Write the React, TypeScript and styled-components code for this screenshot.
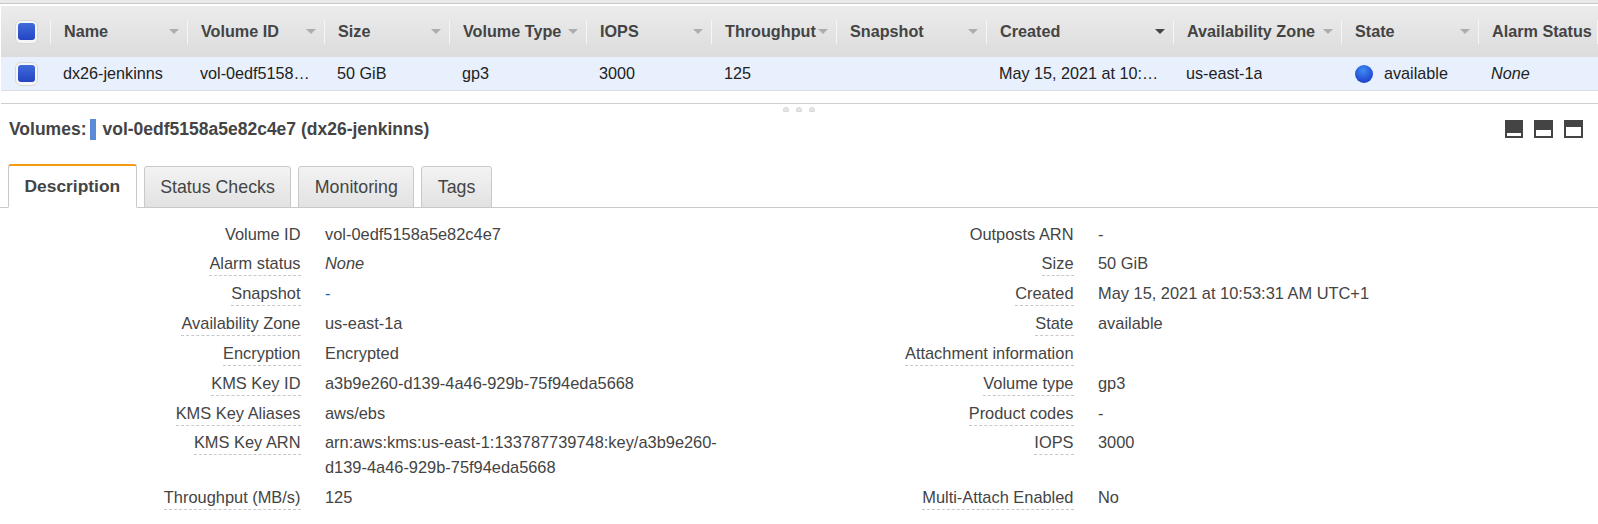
import React, { FC } from "react";
import styled, { createGlobalStyle } from "styled-components";

const GlobalStyle = createGlobalStyle`
	html, body {
		margin: 0;
		padding: 0;
		background: #fff;
		overflow: hidden;
	}
	body {
		font-family: "Liberation Sans", Arial, sans-serif;
		font-size: 14px;
		color: #444;
	}
`;

const Page = styled.div`
	width: 1598px;
	height: 524px;
	overflow: hidden;
`;

const TopStrip = styled.div`
	height: 3px;
	background: #eaeaea;
	border-bottom: 1px solid #c8c8c8;
	margin-bottom: 2px;
`;

const TableGrid = styled.div`
	margin-left: 1px;
	display: grid;
	grid-template-columns: 50px 137px 137px 125px 137px 125px 125px 150px 187px 168px 137px 119px;
`;

const HeaderCell = styled.div<{ $first?: boolean }>`
	height: 51px;
	box-sizing: border-box;
	background: linear-gradient(#ececec, #dcdcdc);
	display: flex;
	align-items: center;
	justify-content: ${(p) => (p.$first ? "center" : "space-between")};
	padding: ${(p) => (p.$first ? "0" : "0 9px 0 13px")};
	font-weight: bold;
	font-size: 16.2px;
	color: #444;
	white-space: nowrap;
	overflow: hidden;
	position: relative;
	&::after {
		content: "";
		position: absolute;
		right: 0;
		top: 14px;
		height: 24px;
		width: 1px;
		background: #f6f6f6;
	}
`;

const SortArrow = styled.span<{ $active?: boolean }>`
	flex: none;
	width: 0;
	height: 0;
	border-left: 5px solid transparent;
	border-right: 5px solid transparent;
	border-top: 5px solid ${(p) => (p.$active ? "#444" : "#adadad")};
`;

const RowCell = styled.div<{ $center?: boolean; $italic?: boolean }>`
	height: 34px;
	box-sizing: border-box;
	background: #e8f0fd;
	border-bottom: 1px solid #d9dde3;
	display: flex;
	align-items: center;
	justify-content: ${(p) => (p.$center ? "center" : "flex-start")};
	padding: ${(p) => (p.$center ? "0" : "0 12px")};
	font-size: 16.2px;
	font-style: ${(p) => (p.$italic ? "italic" : "normal")};
	color: #222;
	white-space: nowrap;
	overflow: hidden;
`;

const CellText = styled.span`
	overflow: hidden;
	text-overflow: ellipsis;
`;

const CheckOuter = styled.span`
	width: 23px;
	height: 24px;
	box-sizing: border-box;
	display: flex;
	align-items: center;
	justify-content: center;
	background: #f6f6f6;
	border: 1px solid #d8d8d8;
	border-radius: 6px;
`;

const CheckInner = styled.span`
	width: 17px;
	height: 17px;
	border-radius: 3px;
	background: linear-gradient(#3f6bdc, #2444c2);
`;

const StatusDot = styled.span`
	flex: none;
	width: 18px;
	height: 18px;
	border-radius: 50%;
	margin: 0 11px 0 1px;
	background: radial-gradient(circle at 45% 30%, #3f8cf0, #2450d8 60%, #1c2fa8);
`;

const Divider = styled.div`
	height: 12px;
	border-bottom: 1px solid #cfcfcf;
	margin-left: 1px;
`;

const GripRow = styled.div`
	height: 5px;
	padding-top: 3px;
	display: flex;
	justify-content: center;
	gap: 7px;
`;

const GripDot = styled.span`
	width: 6px;
	height: 5px;
	border-radius: 3px 3px 1px 1px;
	background: #e6e6e6;
	border: 1px solid #d6d6d6;
	box-sizing: border-box;
`;

const TitleBar = styled.div`
	height: 22px;
	margin-top: 6px;
	padding: 0 15px 0 9px;
	display: flex;
	align-items: center;
	font-weight: bold;
	font-size: 17.5px;
	color: #444;
`;

const TitleMark = styled.span`
	width: 6px;
	height: 21px;
	background: #5a8bd6;
	margin: 0 6px 0 4px;
`;

const TitleIcons = styled.div`
	margin-left: auto;
	display: flex;
	gap: 11px;
`;

const TabStrip = styled.div`
	margin-top: 24px;
	height: 44px;
	box-sizing: border-box;
	border-bottom: 1px solid #c9c9c9;
	padding-left: 8px;
	display: flex;
	align-items: flex-end;
	gap: 7px;
`;

const Tab = styled.div<{ $active?: boolean }>`
	box-sizing: border-box;
	height: ${(p) => (p.$active ? "44px" : "42px")};
	margin-bottom: -1px;
	padding: 0 15.5px;
	display: flex;
	align-items: center;
	font-size: ${(p) => (p.$active ? "17.4px" : "17.8px")};
	font-weight: ${(p) => (p.$active ? "bold" : "normal")};
	color: #444;
	border: 1px solid #c9c9c9;
	border-top: ${(p) => (p.$active ? "2px solid #f39c12" : "1px solid #c9c9c9")};
	border-bottom: ${(p) => (p.$active ? "1px solid #fff" : "1px solid #c9c9c9")};
	border-radius: 3px 3px 0 0;
	background: ${(p) => (p.$active ? "#fff" : "linear-gradient(#f3f3f3, #e2e2e2)")};
`;

const DetailGrid = styled.div`
	margin-top: 11.5px;
	display: grid;
	grid-template-columns: 300.5px 400px 324px 1fr;
	column-gap: 24.5px;
	font-size: 16.4px;
	color: #444;
`;

const LabelCell = styled.div`
	text-align: right;
	height: 100%;
`;

const Label = styled.span<{ $plain?: boolean }>`
	display: inline-block;
	line-height: 20px;
	padding: 4px 0 2px;
	border-bottom: 1px dashed ${(p) => (p.$plain ? "transparent" : "#c8c8c8")};
`;

const Value = styled.div<{ $italic?: boolean; $link?: boolean }>`
	line-height: 24.5px;
	padding: 2px 0 3.35px;
	min-height: 24.5px;
	font-style: ${(p) => (p.$italic ? "italic" : "normal")};
	color: ${(p) => (p.$link ? "#1166bb" : "#444")};
`;

type Column = { label: string; active?: boolean; noArrow?: boolean };

const columns: Column[] = [
	{ label: "Name" },
	{ label: "Volume ID" },
	{ label: "Size" },
	{ label: "Volume Type" },
	{ label: "IOPS" },
	{ label: "Throughput" },
	{ label: "Snapshot" },
	{ label: "Created", active: true },
	{ label: "Availability Zone" },
	{ label: "State" },
	{ label: "Alarm Status", noArrow: true },
];

type Field = { label: string; value?: string; plain?: boolean; italic?: boolean; link?: boolean };

const detailRows: [Field, Field][] = [
	[
		{ label: "Volume ID", value: "vol-0edf5158a5e82c4e7", plain: true },
		{ label: "Outposts ARN", value: "-", plain: true },
	],
	[
		{ label: "Alarm status", value: "None", italic: true },
		{ label: "Size", value: "50 GiB" },
	],
	[
		{ label: "Snapshot", value: "-", link: true },
		{ label: "Created", value: "May 15, 2021 at 10:53:31 AM UTC+1" },
	],
	[
		{ label: "Availability Zone", value: "us-east-1a" },
		{ label: "State", value: "available" },
	],
	[
		{ label: "Encryption", value: "Encrypted" },
		{ label: "Attachment information" },
	],
	[
		{ label: "KMS Key ID", value: "a3b9e260-d139-4a46-929b-75f94eda5668" },
		{ label: "Volume type", value: "gp3" },
	],
	[
		{ label: "KMS Key Aliases", value: "aws/ebs" },
		{ label: "Product codes", value: "-" },
	],
	[
		{ label: "KMS Key ARN", value: "arn:aws:kms:us-east-1:133787739748:key/a3b9e260-d139-4a46-929b-75f94eda5668" },
		{ label: "IOPS", value: "3000" },
	],
	[
		{ label: "Throughput (MB/s)", value: "125" },
		{ label: "Multi-Attach Enabled", value: "No" },
	],
];

const Checkbox: FC = () => (
	<CheckOuter>
		<CheckInner />
	</CheckOuter>
);

// layout buttons: dark frame with a white pane that grows from the bottom
const PaneIcon: FC<{ y: number; w?: number }> = ({ y, w = 18 }) => (
	<svg width={w} height="18" viewBox={`0 0 ${w} 18`}>
		<rect width={w} height="18" fill="#444" />
		<rect x="2" y={y} width={w - 4} height={16 - y} fill="#fff" />
	</svg>
);

const FieldCells: FC<{ field: Field }> = ({ field }) => (
	<>
		<LabelCell>
			<Label $plain={field.plain}>{field.label}</Label>
		</LabelCell>
		<Value $italic={field.italic} $link={field.link}>
			{field.value}
		</Value>
	</>
);

const App: FC = () => {
	return (
		<Page>
			<GlobalStyle />
			<TopStrip />
			<TableGrid>
				<HeaderCell $first>
					<Checkbox />
				</HeaderCell>
				{columns.map((c) => (
					<HeaderCell key={c.label}>
						{c.label}
						{!c.noArrow && <SortArrow $active={c.active} />}
					</HeaderCell>
				))}
				<RowCell $center>
					<Checkbox />
				</RowCell>
				<RowCell><CellText>dx26-jenkinns</CellText></RowCell>
				<RowCell><CellText>vol-0edf5158a5e82c4e7</CellText></RowCell>
				<RowCell><CellText>50 GiB</CellText></RowCell>
				<RowCell><CellText>gp3</CellText></RowCell>
				<RowCell><CellText>3000</CellText></RowCell>
				<RowCell><CellText>125</CellText></RowCell>
				<RowCell />
				<RowCell><CellText>May 15, 2021 at 10:53:31 AM UTC+1</CellText></RowCell>
				<RowCell><CellText>us-east-1a</CellText></RowCell>
				<RowCell>
					<StatusDot />
					<CellText>available</CellText>
				</RowCell>
				<RowCell $italic><CellText>None</CellText></RowCell>
			</TableGrid>
			<Divider />
			<GripRow>
				<GripDot />
				<GripDot />
				<GripDot />
			</GripRow>
			<TitleBar>
				Volumes:
				<TitleMark />
				vol-0edf5158a5e82c4e7 (dx26-jenkinns)
				<TitleIcons>
					<PaneIcon y={13} />
					<PaneIcon y={10} w={19} />
					<PaneIcon y={7} w={19} />
				</TitleIcons>
			</TitleBar>
			<TabStrip>
				<Tab $active>Description</Tab>
				<Tab>Status Checks</Tab>
				<Tab>Monitoring</Tab>
				<Tab>Tags</Tab>
			</TabStrip>
			<DetailGrid>
				{detailRows.map(([left, right]) => (
					<React.Fragment key={left.label}>
						<FieldCells field={left} />
						<FieldCells field={right} />
					</React.Fragment>
				))}
			</DetailGrid>
		</Page>
	);
};

export default App;
